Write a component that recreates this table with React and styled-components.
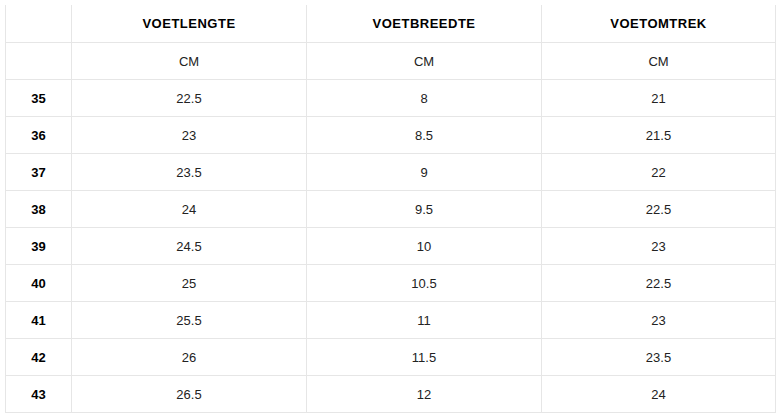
import React from "react";
import styled, { createGlobalStyle } from "styled-components";

const Global = createGlobalStyle`
  html, body { margin: 0; padding: 0; background: #ffffff; }
  body { font-family: "Liberation Sans", Arial, sans-serif; }
`;

const Wrap = styled.div`
  padding: 5px 0 0 5px;
`;

const Table = styled.table`
  border-collapse: collapse;
  table-layout: fixed;
  width: 770px;
  font-family: "Liberation Sans", Arial, sans-serif;
  font-size: 13px;
  color: #111111;
`;

const Cell = styled.td`
  border: 1px solid #e6e6e6;
  height: 36px;
  padding: 0;
  text-align: center;
  vertical-align: middle;
  font-weight: ${(p) => (p.$bold ? 700 : 400)};
  letter-spacing: ${(p) => (p.$head ? "0.5px" : "0")};
  color: ${(p) => (p.$bold ? "#000000" : "#222222")};
`;

const Row = styled.tr`
  &:first-child td {
    border-top: none;
    height: 37px;
  }
`;

const data = [
  ["35", "22.5", "8", "21"],
  ["36", "23", "8.5", "21.5"],
  ["37", "23.5", "9", "22"],
  ["38", "24", "9.5", "22.5"],
  ["39", "24.5", "10", "23"],
  ["40", "25", "10.5", "22.5"],
  ["41", "25.5", "11", "23"],
  ["42", "26", "11.5", "23.5"],
  ["43", "26.5", "12", "24"],
];

export default function App() {
  return (
    <>
      <Global />
      <Wrap>
        <Table>
          <colgroup>
            <col style={{ width: 66 }} />
            <col style={{ width: 235 }} />
            <col style={{ width: 235 }} />
            <col style={{ width: 234 }} />
          </colgroup>
          <tbody>
            <Row>
              <Cell />
              <Cell $bold $head>VOETLENGTE</Cell>
              <Cell $bold $head>VOETBREEDTE</Cell>
              <Cell $bold $head>VOETOMTREK</Cell>
            </Row>
            <Row>
              <Cell />
              <Cell>CM</Cell>
              <Cell>CM</Cell>
              <Cell>CM</Cell>
            </Row>
            {data.map((r) => (
              <Row key={r[0]}>
                <Cell $bold>{r[0]}</Cell>
                <Cell>{r[1]}</Cell>
                <Cell>{r[2]}</Cell>
                <Cell>{r[3]}</Cell>
              </Row>
            ))}
          </tbody>
        </Table>
      </Wrap>
    </>
  );
}
